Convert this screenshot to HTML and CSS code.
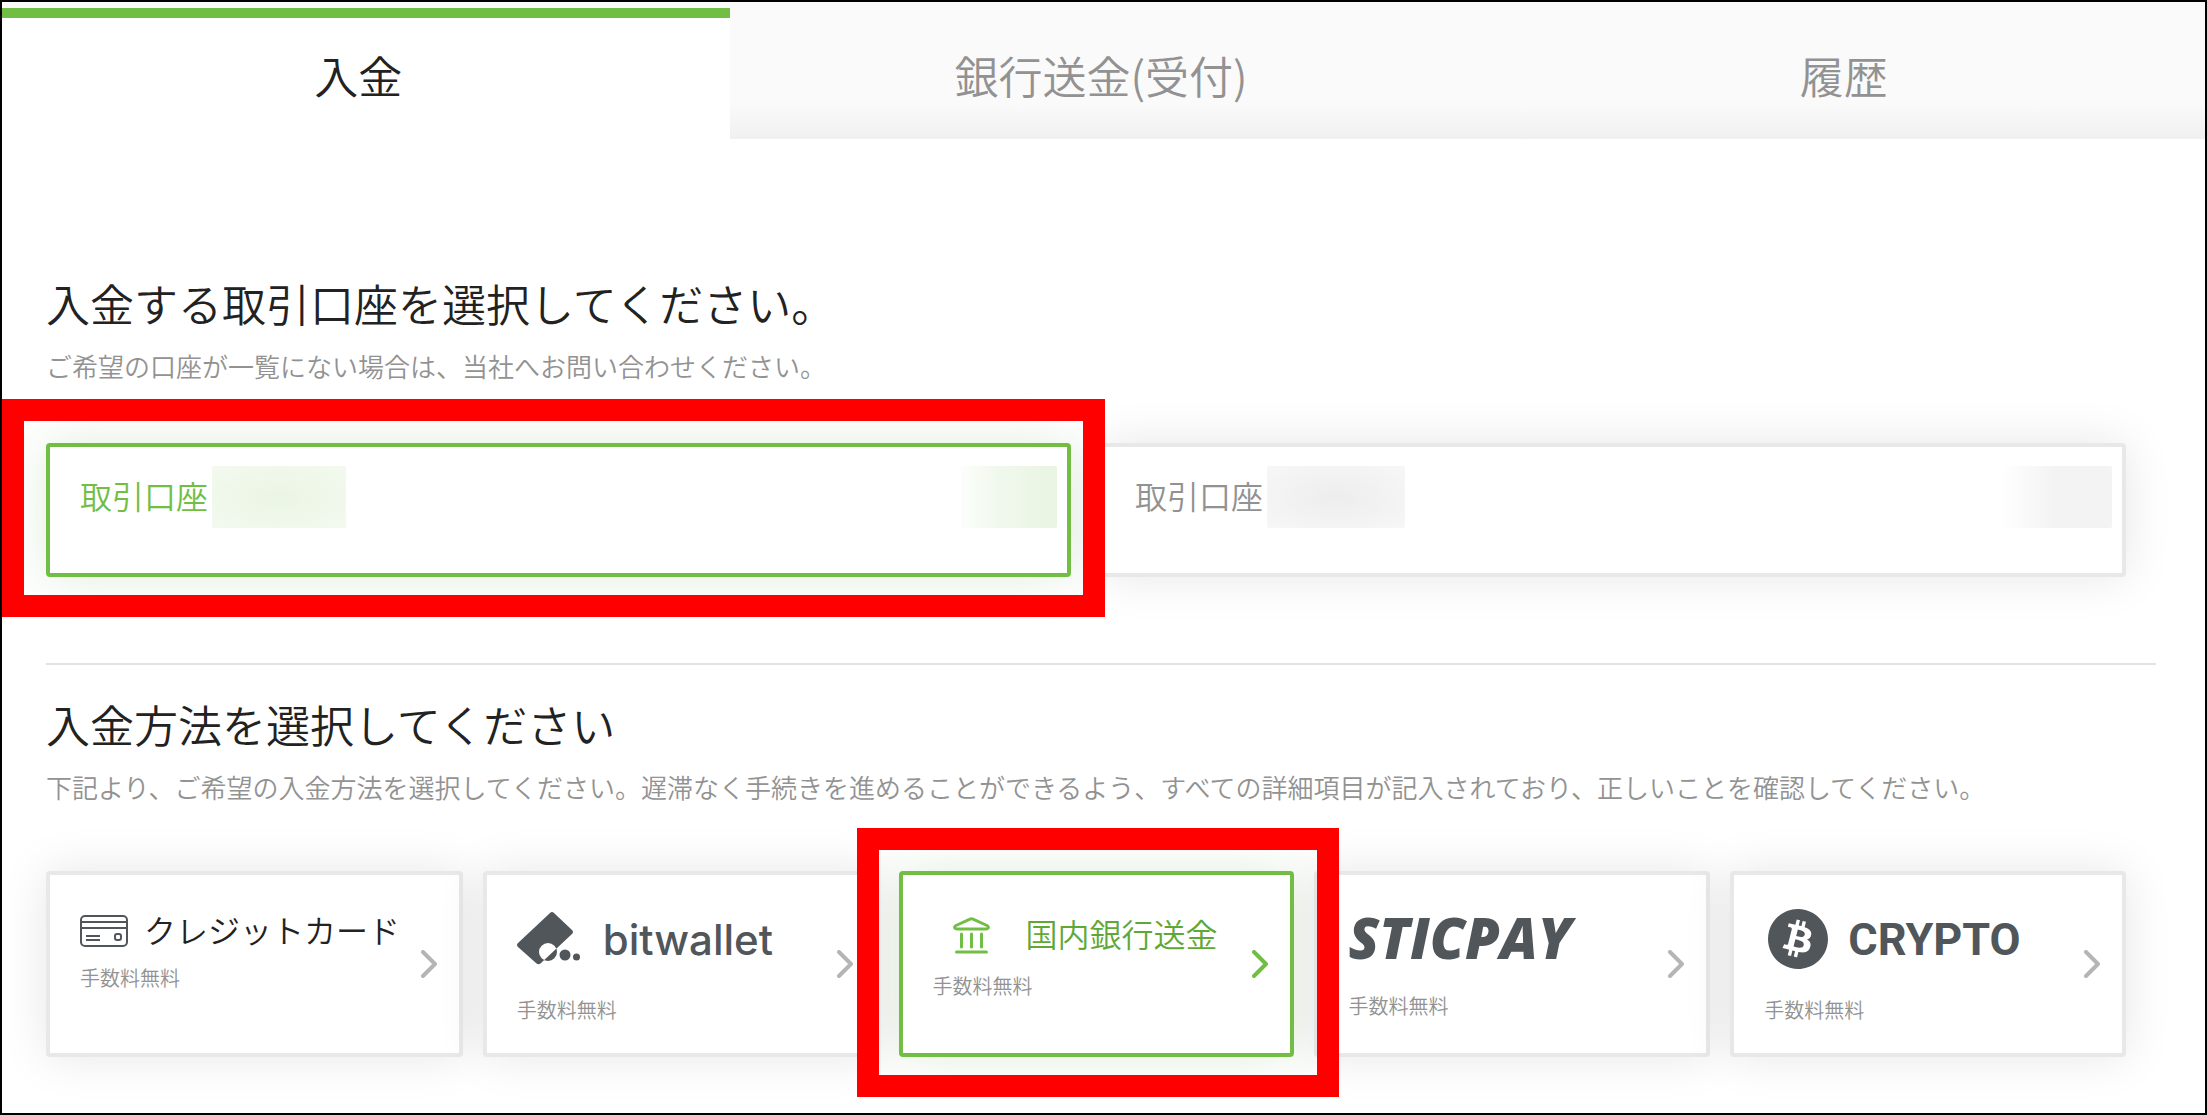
FILE: index.html
```html
<!DOCTYPE html>
<html lang="ja">
<head>
  <meta charset="utf-8">
  <title>入金</title>
  <link rel="stylesheet" href="styles.css">
</head>
<body>
  <nav class="tabs">
    <a class="tab active" href="#deposit">入金</a>
    <a class="tab" href="#bank">銀行送金(受付)</a>
    <a class="tab" href="#history">履歴</a>
  </nav>
  <main class="content" id="deposit">
    <section class="accounts">
      <h2>入金する取引口座を選択してください。</h2>
      <p class="lead">ご希望の口座が一覧にない場合は、当社へお問い合わせください。</p>
      <div class="account-list">
        <button class="card account selected marked">
          <span>取引口座</span>
          <span class="mask mask-number"></span>
          <span class="mask mask-balance"></span>
        </button>
        <button class="card account">
          <span>取引口座</span>
          <span class="mask mask-number"></span>
          <span class="mask mask-balance"></span>
        </button>
      </div>
    </section>
    <hr>
    <section class="methods">
      <h2>入金方法を選択してください</h2>
      <p class="lead">下記より、ご希望の入金方法を選択してください。遅滞なく手続きを進めることができるよう、すべての詳細項目が記入されており、正しいことを確認してください。</p>
      <div class="method-list">
        <button class="card method">
          <span class="name">
            <svg width="48" height="32" viewBox="0 0 48 32" fill="none" stroke="#50565a" stroke-width="2">
              <rect x="1" y="1" width="46" height="30" rx="4"/>
              <path d="M1 7h46M1 13h46M6 21h14M6 25h14"/>
              <rect x="35" y="19" width="6" height="6" rx="2"/>
            </svg>
            <span class="label">クレジットカード</span>
          </span>
          <span class="fee">手数料無料</span>
          <svg class="arrow" width="16" height="28" viewBox="0 0 16 28"><path d="M2 2l12 12L2 26"/></svg>
        </button>
        <button class="card method logo">
          <span class="name bitwallet">
            <svg width="64" height="54" viewBox="0 0 64 54" fill="#50565a">
              <path fill-rule="evenodd" d="M33 1Q35 -1 37 1L55 18Q57 20 55 22L24 51Q21.500 53.500 19 51L1 35Q-1 33 1 31ZM22 40a9 9 0 1 0 18 0a9 9 0 1 0 -18 0Z"/>
              <circle cx="48" cy="43" r="5.500"/>
              <circle cx="59.500" cy="45" r="3.500"/>
            </svg>
            <span>bitwallet</span>
          </span>
          <span class="fee">手数料無料</span>
          <svg class="arrow" width="16" height="28" viewBox="0 0 16 28"><path d="M2 2l12 12L2 26"/></svg>
        </button>
        <button class="card method selected marked">
          <span class="name bank">
            <svg width="37" height="37" viewBox="0 0 37 37" fill="none" stroke="#72be44" stroke-width="3" stroke-linecap="round" stroke-linejoin="round">
              <path d="M17 2.200Q18.500 1.500 20 2.200L34 8.500Q36 9.600 35 11.300Q34.600 12 33 12H4Q2.400 12 2 11.300Q1 9.600 3 8.500Z"/>
              <path d="M8.500 17v13M18.500 17v13M28.500 17v13M3.500 35h30"/>
            </svg>
            <span class="label">国内銀行送金</span>
          </span>
          <span class="fee">手数料無料</span>
          <svg class="arrow" width="16" height="28" viewBox="0 0 16 28"><path d="M2 2l12 12L2 26"/></svg>
        </button>
        <button class="card method logo">
          <span class="name sticpay">STICPAY</span>
          <span class="fee">手数料無料</span>
          <svg class="arrow" width="16" height="28" viewBox="0 0 16 28"><path d="M2 2l12 12L2 26"/></svg>
        </button>
        <button class="card method logo">
          <span class="name crypto">
            <svg width="60" height="60" viewBox="0 0 24 24" fill="#50565a">
              <path d="M23.638 14.904c-1.602 6.430-8.113 10.340-14.542 8.736C2.670 22.050-1.244 15.525.362 9.105 1.962 2.670 8.475-1.243 14.900.358c6.430 1.605 10.342 8.115 8.738 14.548v-.002zm-6.350-4.613c.240-1.590-.974-2.450-2.640-3.030l.540-2.153-1.315-.330-.525 2.107c-.345-.087-.705-.167-1.064-.250l.526-2.127-1.320-.330-.540 2.165c-.285-.067-.565-.132-.840-.200l-1.815-.450-.350 1.407s.975.225.955.236c.535.136.630.486.615.766l-1.477 5.920c-.075.166-.240.406-.614.314.015.020-.960-.240-.960-.240l-.660 1.510 1.710.426.930.242-.540 2.190 1.320.327.540-2.170c.360.100.705.190 1.050.273l-.510 2.154 1.320.330.545-2.190c2.240.427 3.930.257 4.640-1.774.570-1.637-.030-2.580-1.217-3.196.854-.193 1.500-.760 1.680-1.930h.010zm-3.010 4.220c-.404 1.640-3.157.750-4.050.530l.720-2.900c.896.230 3.757.670 3.330 2.370zm.410-4.240c-.370 1.490-2.662.735-3.405.550l.654-2.640c.744.180 3.137.524 2.750 2.084v.006z"/>
            </svg>
            <span>CRYPTO</span>
          </span>
          <span class="fee">手数料無料</span>
          <svg class="arrow" width="16" height="28" viewBox="0 0 16 28"><path d="M2 2l12 12L2 26"/></svg>
        </button>
      </div>
    </section>
  </main>
</body>
</html>
```
FILE: styles.css
```css
* {
  box-sizing: border-box;
}
body {
  margin: 0;
  min-height: 100vh;
  border: 2px solid #000;
  background-color: #fff;
  color: #222;
  font-family: "Noto Sans CJK JP", sans-serif;
  font-weight: 350;
  overflow: hidden;
}
.tabs {
  display: flex;
  margin: 0 -10px 0 -15px;
  background: linear-gradient(#fafafa 75%, #f0f0f0);
}
.tab {
  flex: 1;
  margin-top: 6px;
  padding: 30px 0 37px;
  border-top: 10px solid transparent;
  color: #929292;
  font-size: 44px;
  line-height: 54px;
  text-align: center;
  text-decoration: none;
}
.tab.active {
  border-top-color: #72be44;
  background-color: #fff;
  color: #222;
}
.content {
  padding: 134px 49px 40px 44px;
}
h2 {
  margin: 0 0 13px;
  font-size: 44px;
  font-weight: 350;
  line-height: 60px;
}
.lead {
  margin: 0;
  color: #929292;
  font-size: 26px;
  line-height: 40px;
}
hr {
  margin: 86px 0 29px;
  border: 0;
  border-top: 2px solid #e3e3e3;
}
.card {
  position: relative;
  border: 4px solid #e8e8e8;
  border-radius: 4px;
  background-color: #fff;
  box-shadow: 0 0 48px rgba(0, 0, 0, 0.1);
  color: #929292;
  font-family: inherit;
  font-weight: 350;
  text-align: left;
  cursor: pointer;
}
.card.selected {
  border-color: #72be44;
  box-shadow: 0 0 48px rgba(70, 140, 40, 0.16);
}

/* red frame round the chosen card */
.marked {
  z-index: 1;
}
.marked::after {
  content: "";
  position: absolute;
  inset: -47px -49px -44px -46px;
  border: 22px solid #f00;
  pointer-events: none;
}
.account.marked::after {
  inset: -48px -38px -44px -48px;
}

.account-list {
  display: grid;
  grid-template-columns: 1fr 1fr;
  gap: 30px;
  margin: 57px 30px 0 0;
}
.account {
  display: flex;
  align-items: flex-start;
  height: 134px;
  padding: 19px 10px 0 30px;
  font-size: 32px;
  line-height: 58px;
}
.account.selected {
  color: #72be44;
}
.mask {
  height: 62px;
  border-radius: 2px;
}
.mask-number {
  width: 138px;
  margin-left: 4px;
  background: radial-gradient(#ededed, #f7f7f7);
}
.mask-balance {
  width: 112px;
  margin-left: auto;
  background: linear-gradient(90deg, #fff, #f3f3f3 50%);
}
.selected .mask-number {
  width: 134px;
  background: radial-gradient(#ebf5e4, #f3f9ef);
}
.selected .mask-balance {
  width: 96px;
  background: linear-gradient(90deg, #fcfefb, #f0f8ec 40%, #e9f4e1);
}

.method-list {
  display: grid;
  grid-template-columns: 417fr repeat(4, 396fr);
  gap: 20px;
  margin: 64px 30px 0 0;
}
.method {
  display: flex;
  flex-direction: column;
  align-items: flex-start;
  height: 186px;
  padding: 30px 0 0 30px;
}
.name {
  display: flex;
  align-items: center;
  gap: 16px;
  height: 52px;
  margin-bottom: 6px;
  color: #222;
  font-size: 32px;
  white-space: nowrap;
}
.label {
  padding-bottom: 5px;
}
.logo .name {
  height: 68px;
  margin-bottom: 22px;
  color: #50565a;
}
.name.bank {
  gap: 36px;
  height: 60px;
  padding-left: 20px;
  color: #5fa836;
}
.name.bitwallet {
  gap: 22px;
  font-family: Inter, sans-serif;
  font-size: 42px;
  font-weight: 500;
}
.logo .name.sticpay {
  height: 64px;
  font-family: "Open Sans", sans-serif;
  font-size: 56px;
  font-style: italic;
  font-weight: 800;
}
.name.crypto {
  gap: 20px;
  padding-left: 4px;
  font-family: Roboto, sans-serif;
  font-size: 45px;
  font-weight: 700;
}
.fee {
  font-size: 20px;
  line-height: 30px;
}
.arrow {
  position: absolute;
  top: 50%;
  right: 22px;
  margin-top: -14px;
  fill: none;
  stroke: #b5b5b5;
  stroke-width: 4;
  stroke-linecap: round;
  stroke-linejoin: round;
}
.selected .arrow {
  stroke: #72be44;
}
```
